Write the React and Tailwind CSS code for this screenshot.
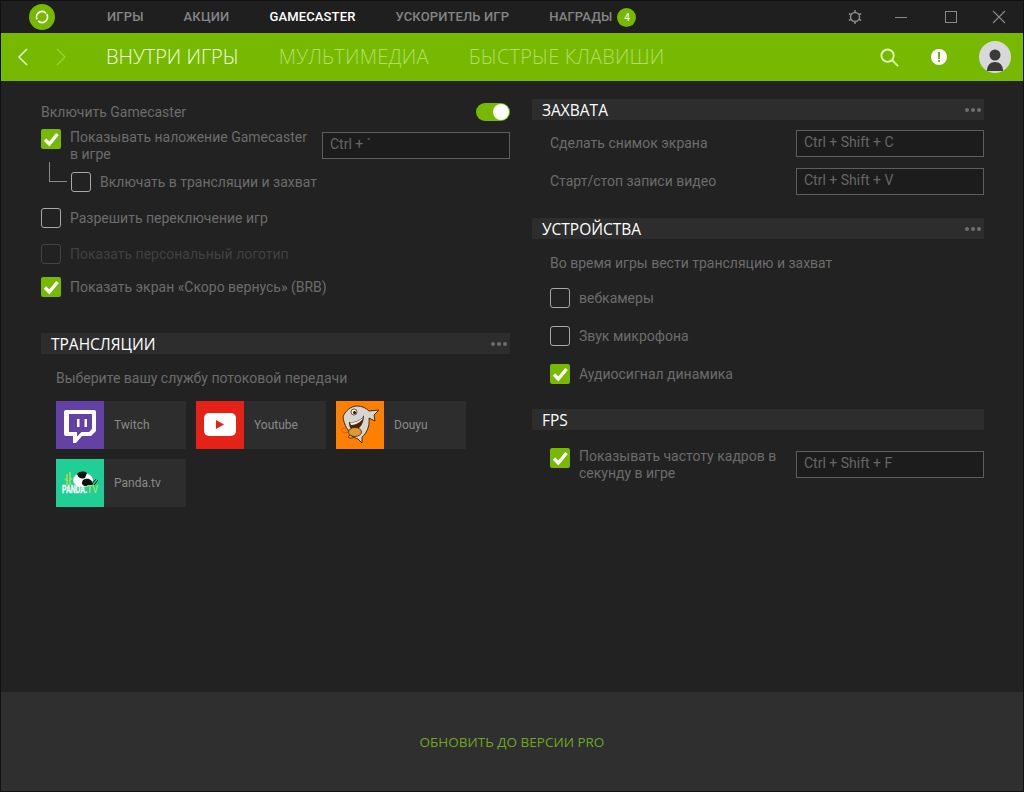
import React from "react";

function Check({ on, dim }) {
  if (on)
    return (
      <span className="w-5 h-5 shrink-0 rounded-[2px] bg-[#76b900] flex items-center justify-center">
        <svg width="20" height="20" viewBox="0 0 20 20"><path d="M4 10.5l4.300 4.500L16.500 5" fill="none" stroke="#fff" strokeWidth="3.400" /></svg>
      </span>
    );
  return <span className={`w-5 h-5 shrink-0 rounded-[3px] border ${dim ? "border-[#444]" : "border-[#a8a8a8]"}`} />;
}

function Key({ children, className = "" }) {
  return (
    <div className={`w-[188px] h-[27px] shrink-0 border border-[#5e5e5e] bg-[#1c1c1c] pl-[7px] text-[14px] leading-[22px] text-[#666666] ${className}`}>
      {children}
    </div>
  );
}

function Head({ children, dots = true }) {
  return (
    <div className="h-[21px] bg-[#2d2d2d] flex items-center justify-between pl-[10px] pr-[3px] font-['Open_Sans',sans-serif] text-[15.5px] text-white">
      <span className="mt-[3px]">{children}</span>
      {dots && (
        <span className="flex gap-[2px]">
          <i className="w-1 h-1 rounded-full bg-[#6e6e6e]" />
          <i className="w-1 h-1 rounded-full bg-[#6e6e6e]" />
          <i className="w-1 h-1 rounded-full bg-[#6e6e6e]" />
        </span>
      )}
    </div>
  );
}

function Row({ on, children, className = "", dim }) {
  return (
    <div className={`flex items-center h-5 ${className}`}>
      <Check on={on} dim={dim} />
      <span className={`ml-[9px] ${dim ? "text-[#414141]" : "text-[#6c6c6c]"}`}>{children}</span>
    </div>
  );
}

function Tile({ color, name, children }) {
  return (
    <div className="w-[130px] h-12 bg-[#2d2d2d] flex items-center">
      <div className="w-12 h-12 shrink-0" style={{ background: color }}>{children}</div>
      <span className="ml-[10px] text-[12px] text-[#8a8a8a]">{name}</span>
    </div>
  );
}

const Twitch = () => (
  <svg width="48" height="48" viewBox="0 0 48 48">
    <path fillRule="evenodd" fill="#fff" d="M10 9H38Q40 9 40 11V30L35 35H26L20 42H17V35H10Q8 35 8 33V11Q8 9 10 9ZM13 13V31H21V35.500L25.500 31H33L36 28V13Z" />
    <rect x="21" y="18" width="2.500" height="8" fill="#fff" />
    <rect x="28.500" y="18" width="2.500" height="8" fill="#fff" />
  </svg>
);

const Youtube = () => (
  <svg width="48" height="48" viewBox="0 0 48 48">
    <rect x="8" y="12" width="32" height="23" rx="5" fill="#fff" />
    <path d="M20 19l8 4.500-8 4.500z" fill="#e62117" />
  </svg>
);

const Shark = () => (
  <svg width="48" height="48" viewBox="0 0 48 48">
    <path d="M18 36c-3 2-5 1-6 0l3-3" fill="#e09a30" stroke="#3a2410" strokeWidth="0.800" />
    <path d="M7 16C9 10 15 5 21 5C26 5 30 7 33 10L43 9L38 14L39 20L33 17C34 26 30 33 26 36L26 42L22 38L17 36C12 30 8 24 7 16Z" fill="#d8d5d2" stroke="#33210f" strokeWidth="0.900" />
    <circle cx="18" cy="11" r="3" fill="#fff5d0" stroke="#33210f" strokeWidth="0.700" />
    <circle cx="18.500" cy="11.500" r="1.500" fill="#111" />
    <path d="M13 21C20 22 26 18 28 14C28 22 24 29 18 29C15 29 13 26 13 21Z" fill="#4a2308" />
    <path d="M14 21.500C20 22 25 19 27 16L26 19C22 23 18 24 15 24Z" fill="#f5f0e8" />
    <ellipse cx="19" cy="31" rx="6.500" ry="4.500" fill="#e09a30" stroke="#33210f" strokeWidth="0.800" />
    <path d="M13 31C8 33 4 30 6 28C8 26 11 28 14 29" fill="none" stroke="#c95a10" strokeWidth="0.800" />
  </svg>
);

const Panda = () => (
  <svg width="48" height="48" viewBox="0 0 48 48">
    <path d="M11 26V15M14 26V13M9 20l3 2M16 19l-2 2" fill="none" stroke="#9fdc5a" strokeWidth="1.600" />
    <path d="M35 26l5-6M38 26l4-5" fill="none" stroke="#111" strokeWidth="1" />
    <ellipse cx="27" cy="21" rx="10" ry="7" fill="#fff" />
    <path d="M21 15c3-3 7-3 10-1l-2 5c-3 1-6 1-8-4z" fill="#111" />
    <path d="M29 20c3-1 7 0 8 5l-2 2H27c-2-3-1-6 2-7z" fill="#111" />
    <text x="6" y="34" textLength="25" lengthAdjust="spacingAndGlyphs" fontFamily="'Liberation Sans',sans-serif" fontWeight="700" fontSize="10" fill="#fff" stroke="#fff" strokeWidth="0.300">PANDA.</text>
    <text x="31" y="34" textLength="11" lengthAdjust="spacingAndGlyphs" fontFamily="'Liberation Sans',sans-serif" fontWeight="700" fontSize="10" fill="#a5e060">TV</text>
  </svg>
);

function TopItem({ children, active, className = "" }) {
  return <span className={`text-[13px] tracking-[0.15px] font-medium ${active ? "text-white" : "text-[#858585]"} ${className}`}>{children}</span>;
}

export default function App() {
  return (
    <div className="w-[1024px] h-[792px] overflow-hidden bg-[#222222] border-l border-r border-[#111] flex flex-col font-['Roboto',sans-serif] text-[14px] box-border">
      {/* top bar */}
      <div className="h-[33px] shrink-0 bg-[#1f1f1f] flex items-center border-t border-[#111]">
        <div className="ml-[28px] w-[26px] h-[26px] rounded-full bg-[#76b900] flex items-center justify-center">
          <svg width="16" height="16" viewBox="0 0 16 16">
            <circle cx="8" cy="8" r="5.500" fill="none" stroke="#fff" strokeWidth="1.600" strokeDasharray="15.300 2" transform="rotate(-30 8 8)" />
          </svg>
        </div>
        <TopItem className="ml-[52px]">ИГРЫ</TopItem>
        <TopItem className="ml-[40px]">АКЦИИ</TopItem>
        <TopItem active className="ml-[40px]">GAMECASTER</TopItem>
        <TopItem className="ml-[40px]">УСКОРИТЕЛЬ ИГР</TopItem>
        <TopItem className="ml-[40px]">НАГРАДЫ</TopItem>
        <span className="ml-[5px] w-[19px] h-[19px] rounded-full bg-[#76b900] text-white text-[10px] flex items-center justify-center">4</span>
        <svg className="ml-[211px]" width="16" height="16" viewBox="0 0 16 16" fill="none" stroke="#8a8a8a">
          <circle cx="8" cy="8" r="4.500" strokeWidth="1.500" />
          <path d="M8 1v2.500M8 12.500V15M1.900 4.500l2.200 1.300M11.900 10.200l2.200 1.300M1.900 11.500l2.200-1.300M11.900 5.800l2.200-1.300" strokeWidth="1.500" />
        </svg>
        <span className="ml-[32px] w-3 h-px bg-[#8a8a8a]" />
        <span className="ml-[38px] w-3 h-3 border border-[#8a8a8a]" />
        <svg className="ml-[35px]" width="14" height="14" viewBox="0 0 14 14"><path d="M1 1l12 12M13 1L1 13" stroke="#8a8a8a" strokeWidth="1.100" /></svg>
      </div>
      {/* green bar */}
      <div className="h-12 shrink-0 bg-[#76b900] flex items-center font-['Open_Sans',sans-serif] font-light text-[20px]">
        <svg className="ml-[16px]" width="12" height="18" viewBox="0 0 12 18"><path d="M10 1L2 9l8 8" fill="none" stroke="#e4f5c4" strokeWidth="1.500" /></svg>
        <svg className="ml-[26px]" width="12" height="18" viewBox="0 0 12 18"><path d="M2 1l8 8-8 8" fill="none" stroke="#9ad03e" strokeWidth="1.300" /></svg>
        <span className="ml-[39px] text-[#f2fbe0]">ВНУТРИ ИГРЫ</span>
        <span className="ml-[40px] tracking-[0.25px] text-[#b3dd66]">МУЛЬТИМЕДИА</span>
        <span className="ml-[40px] tracking-[0.15px] text-[#b3dd66]">БЫСТРЫЕ КЛАВИШИ</span>
        <svg className="ml-auto" width="19" height="19" viewBox="0 0 20 20" fill="none" stroke="#e0f4b8" strokeWidth="2">
          <circle cx="8" cy="8" r="6.500" />
          <path d="M12.500 12.500L19 19" />
        </svg>
        <svg className="ml-[32px]" width="16" height="16" viewBox="0 0 16 16">
          <circle cx="8" cy="8" r="8" fill="#fff" />
          <rect x="7" y="3" width="2" height="7" fill="#76b900" />
          <rect x="7" y="11" width="2" height="2" fill="#76b900" />
        </svg>
        <div className="ml-[32px] mr-[12px] w-8 h-8 rounded-full bg-[#d8d8d8] overflow-hidden flex justify-center">
          <svg width="32" height="32" viewBox="0 0 32 32">
            <circle cx="16" cy="14" r="5.500" fill="#3a3a3a" />
            <path d="M8 30c0-6 3.500-9 8-9s8 3 8 9z" fill="#3a3a3a" />
          </svg>
        </div>
      </div>
      {/* content */}
      <div className="flex-1 flex">
        <div className="w-[469px] ml-[40px] pt-[22px]">
          <div className="flex items-center justify-between h-[18px] text-[#6c6c6c]">
            <span>Включить Gamecaster</span>
            <span className="w-[34px] h-[18px] rounded-full bg-[#76b900] flex items-center justify-end pr-[1px]">
              <i className="w-4 h-4 rounded-full bg-white" />
            </span>
          </div>
          <div className="flex mt-[8px]">
            <Check on />
            <span className="ml-[9px] w-[245px] leading-[17px] text-[#6c6c6c]">Показывать наложение Gamecaster в игре</span>
            <Key className="mt-[3px] ml-[7px]">Ctrl + `</Key>
          </div>
          <div className="flex items-center h-5 mt-[9px] ml-[30px] relative">
            <span className="absolute left-[-22px] top-[-10px] w-[18px] h-5 border-l border-b border-[#8a8a8a]" />
            <Check />
            <span className="ml-[9px] text-[#6c6c6c]">Включать в трансляции и захват</span>
          </div>
          <Row className="mt-[16px]">Разрешить переключение игр</Row>
          <Row className="mt-[16px]" dim>Показать персональный логотип</Row>
          <Row className="mt-[13px]" on>Показать экран «Скоро вернусь» (BRB)</Row>
          <div className="mt-[36px]"><Head>ТРАНСЛЯЦИИ</Head></div>
          <div className="ml-[15px] mt-[16px] text-[#6c6c6c] leading-[17px]">Выберите вашу службу потоковой передачи</div>
          <div className="ml-[15px] mt-[14px] flex flex-wrap gap-[10px] w-[420px]">
            <Tile color="#6441a4" name="Twitch"><Twitch /></Tile>
            <Tile color="#e62117" name="Youtube"><Youtube /></Tile>
            <Tile color="#ff7f00" name="Douyu"><Shark /></Tile>
            <Tile color="#1fcf96" name="Panda.tv"><Panda /></Tile>
          </div>
        </div>
        <div className="w-[452px] ml-[22px] pt-[18px]">
          <Head>ЗАХВАТА</Head>
          <div className="flex items-center justify-between pl-[18px] mt-[10px] text-[#6c6c6c]">
            <span>Сделать снимок экрана</span>
            <Key>Ctrl + Shift + C</Key>
          </div>
          <div className="flex items-center justify-between pl-[18px] mt-[11px] text-[#6c6c6c]">
            <span>Старт/стоп записи видео</span>
            <Key>Ctrl + Shift + V</Key>
          </div>
          <div className="mt-[23px]"><Head>УСТРОЙСТВА</Head></div>
          <div className="pl-[18px] mt-[16px] leading-[17px] text-[#6c6c6c]">Во время игры вести трансляцию и захват</div>
          <div className="pl-[18px]">
            <Row className="mt-[16px]">вебкамеры</Row>
            <Row className="mt-[18px]">Звук микрофона</Row>
            <Row className="mt-[18px]" on>Аудиосигнал динамика</Row>
          </div>
          <div className="mt-[25px]"><Head dots={false}>FPS</Head></div>
          <div className="flex pl-[18px] mt-[18px]">
            <Check on />
            <span className="ml-[9px] w-[205px] leading-[17px] text-[#6c6c6c]">Показывать частоту кадров в секунду в игре</span>
            <Key className="mt-[3px] ml-auto">Ctrl + Shift + F</Key>
          </div>
        </div>
      </div>
      {/* footer */}
      <div className="h-[100px] shrink-0 bg-[#2f2f2f] border-b border-[#111] flex items-center justify-center pt-[1px] font-['Open_Sans',sans-serif] text-[13.5px] text-[#6fa820]">
        ОБНОВИТЬ ДО ВЕРСИИ PRO
      </div>
    </div>
  );
}
